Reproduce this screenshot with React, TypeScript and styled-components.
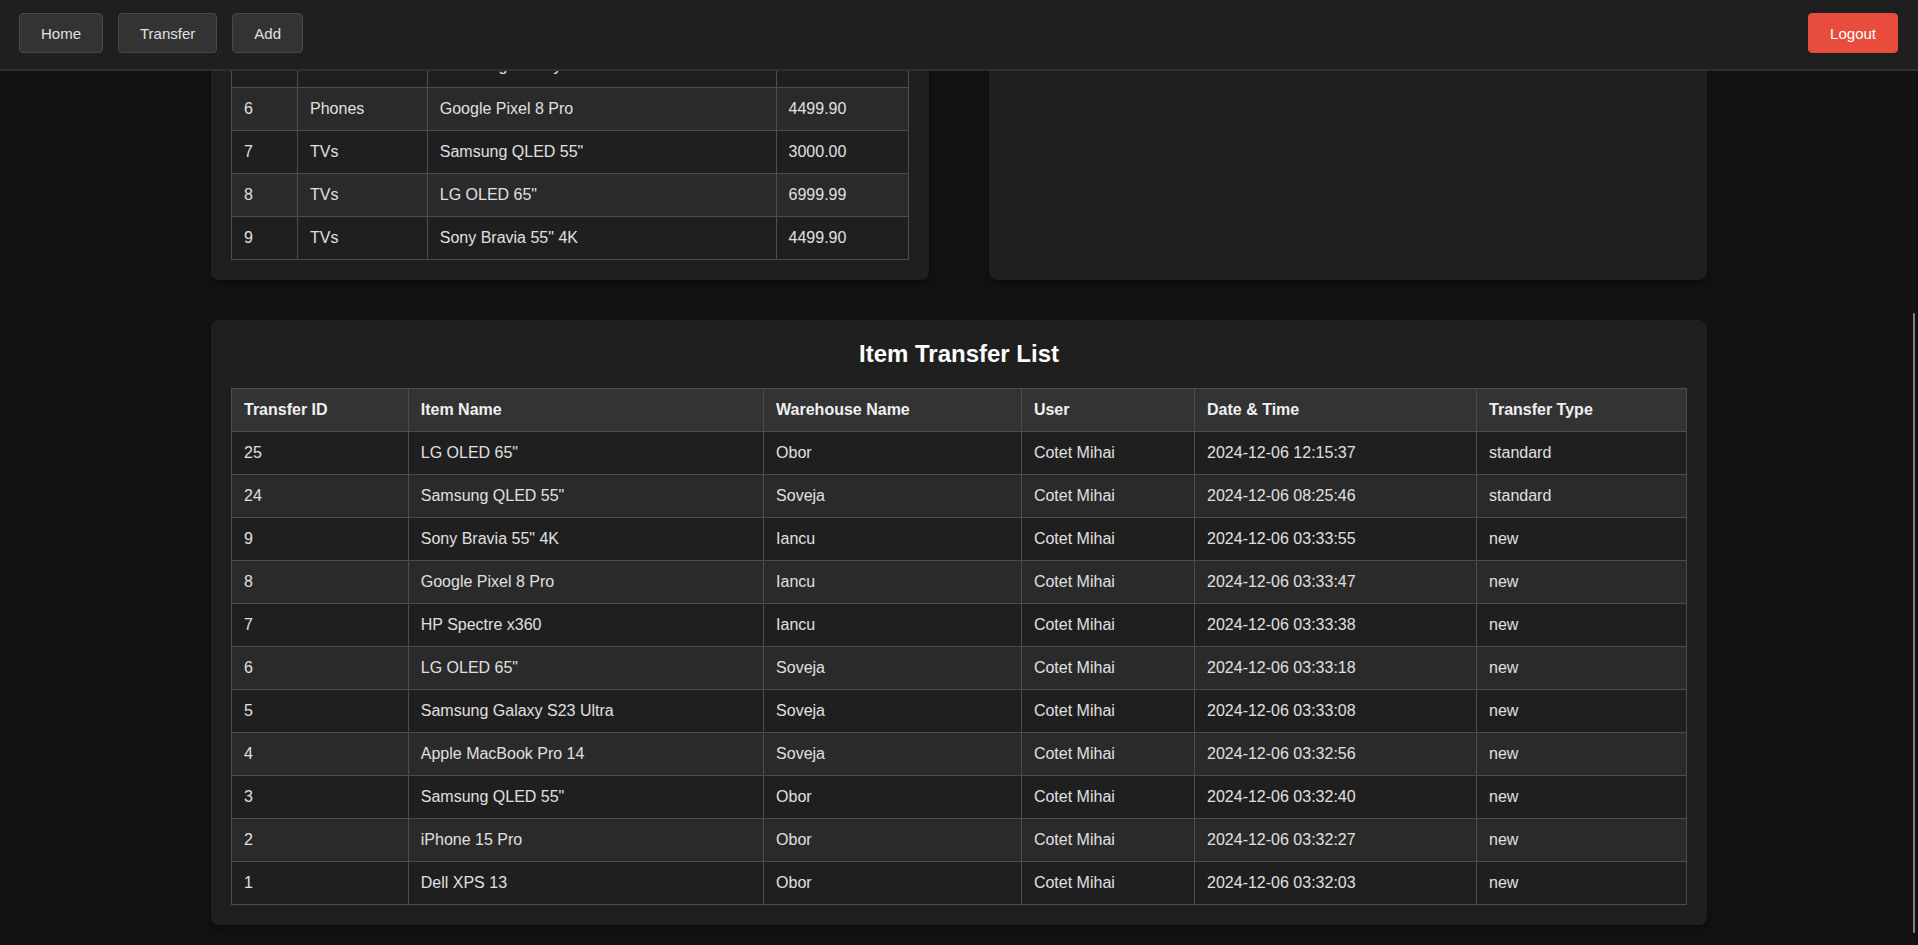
import styled, { createGlobalStyle } from "styled-components";

const GlobalStyle = createGlobalStyle`
  html, body {
    margin: 0;
    padding: 0;
    background: #121212;
    color: #e0e0e0;
    font-family: "Liberation Sans", Arial, sans-serif;
    overflow: hidden;
  }
  * { box-sizing: border-box; }
`;

const NavBar = styled.nav`
  position: fixed;
  top: 0;
  left: 0;
  right: 0;
  z-index: 10;
  height: 71px;
  padding: 13px 20px 0 19px;
  display: flex;
  align-items: flex-start;
  justify-content: space-between;
  background: #1f1f1f;
  border-bottom: 2px solid #2f2f2f;
`;

const NavGroup = styled.div`
  display: flex;
  gap: 15px;
`;

const NavButton = styled.button<{ $danger?: boolean }>`
  height: 40px;
  padding: 0 21px;
  font-family: inherit;
  font-size: 15px;
  color: ${(p) => (p.$danger ? "#fff" : "#e0e0e0")};
  background: ${(p) => (p.$danger ? "#e74c3c" : "#333")};
  border: 1px solid ${(p) => (p.$danger ? "#e74c3c" : "#484848")};
  border-radius: 4px;
  cursor: pointer;
`;

// the page is shown scrolled to its end: content sits on the bottom edge
const Viewport = styled.main`
  height: 100vh;
  overflow: hidden;
  display: flex;
  flex-direction: column;
  justify-content: flex-end;
`;

const Container = styled.div`
  width: 78%;
  margin: 0 auto;
  padding-bottom: 20px;
  display: flex;
  flex-direction: column;
  gap: 40px;
  flex-shrink: 0;
`;

const TopRow = styled.div`
  display: grid;
  grid-template-columns: 1fr 1fr;
  gap: 60px;
`;

const Card = styled.section`
  background: #1f1f1f;
  border-radius: 8px;
  padding: 20px;
  box-shadow: 0 4px 10px rgba(0, 0, 0, 0.35);
`;

const CardTitle = styled.h2`
  margin: 0 0 20px;
  font-size: 24px;
  font-weight: bold;
  color: #fff;
  text-align: center;
`;

const Table = styled.table`
  width: 100%;
  border-collapse: collapse;
  table-layout: fixed;
  font-size: 16px;

  tbody tr:nth-child(odd) {
    background: #1f1f1f;
  }
  tbody tr:nth-child(even) {
    background: #2a2a2a;
  }
`;

const Th = styled.th<{ $w: string }>`
  width: ${(p) => p.$w};
  padding: 12px;
  text-align: left;
  font-weight: bold;
  color: #f0f0f0;
  background: #333;
  border: 1px solid #4d4d4d;
`;

const Td = styled.td`
  padding: 12px;
  color: #e0e0e0;
  border: 1px solid #4d4d4d;
  white-space: nowrap;
`;

const ScrollThumb = styled.div`
  position: fixed;
  right: 3px;
  top: 313px;
  bottom: 12px;
  width: 2px;
  border-radius: 1px;
  background: #857d80;
`;

const items = [
  { id: 1, category: "Laptops", name: "Apple MacBook Pro 14", price: "9999.00" },
  { id: 2, category: "Laptops", name: "Dell XPS 13", price: "6499.00" },
  { id: 3, category: "Laptops", name: "HP Spectre x360", price: "7299.99" },
  { id: 4, category: "Phones", name: "iPhone 15 Pro", price: "5999.00" },
  { id: 5, category: "Phones", name: "Samsung Galaxy S23 Ultra", price: "5499.90" },
  { id: 6, category: "Phones", name: "Google Pixel 8 Pro", price: "4499.90" },
  { id: 7, category: "TVs", name: 'Samsung QLED 55"', price: "3000.00" },
  { id: 8, category: "TVs", name: 'LG OLED 65"', price: "6999.99" },
  { id: 9, category: "TVs", name: 'Sony Bravia 55" 4K', price: "4499.90" },
];

const transfers = [
  { id: 25, item: 'LG OLED 65"', warehouse: "Obor", date: "2024-12-06 12:15:37", type: "standard" },
  { id: 24, item: 'Samsung QLED 55"', warehouse: "Soveja", date: "2024-12-06 08:25:46", type: "standard" },
  { id: 9, item: 'Sony Bravia 55" 4K', warehouse: "Iancu", date: "2024-12-06 03:33:55", type: "new" },
  { id: 8, item: "Google Pixel 8 Pro", warehouse: "Iancu", date: "2024-12-06 03:33:47", type: "new" },
  { id: 7, item: "HP Spectre x360", warehouse: "Iancu", date: "2024-12-06 03:33:38", type: "new" },
  { id: 6, item: 'LG OLED 65"', warehouse: "Soveja", date: "2024-12-06 03:33:18", type: "new" },
  { id: 5, item: "Samsung Galaxy S23 Ultra", warehouse: "Soveja", date: "2024-12-06 03:33:08", type: "new" },
  { id: 4, item: "Apple MacBook Pro 14", warehouse: "Soveja", date: "2024-12-06 03:32:56", type: "new" },
  { id: 3, item: 'Samsung QLED 55"', warehouse: "Obor", date: "2024-12-06 03:32:40", type: "new" },
  { id: 2, item: "iPhone 15 Pro", warehouse: "Obor", date: "2024-12-06 03:32:27", type: "new" },
  { id: 1, item: "Dell XPS 13", warehouse: "Obor", date: "2024-12-06 03:32:03", type: "new" },
];

function App() {
  return (
    <>
      <GlobalStyle />
      <NavBar>
        <NavGroup>
          <NavButton>Home</NavButton>
          <NavButton>Transfer</NavButton>
          <NavButton>Add</NavButton>
        </NavGroup>
        <NavButton $danger>Logout</NavButton>
      </NavBar>

      <Viewport>
        <Container>
          <TopRow>
            <Card>
              <CardTitle>Item List</CardTitle>
              <Table>
                <thead>
                  <tr>
                    <Th $w="9.76%">ID</Th>
                    <Th $w="19.16%">Category</Th>
                    <Th $w="51.52%">Name</Th>
                    <Th $w="19.56%">Price</Th>
                  </tr>
                </thead>
                <tbody>
                  {items.map((it) => (
                    <tr key={it.id}>
                      <Td>{it.id}</Td>
                      <Td>{it.category}</Td>
                      <Td>{it.name}</Td>
                      <Td>{it.price}</Td>
                    </tr>
                  ))}
                </tbody>
              </Table>
            </Card>
            <Card>
              <CardTitle>Warehouses</CardTitle>
            </Card>
          </TopRow>

          <Card>
            <CardTitle>Item Transfer List</CardTitle>
            <Table>
              <thead>
                <tr>
                  <Th $w="12.15%">Transfer ID</Th>
                  <Th $w="24.42%">Item Name</Th>
                  <Th $w="17.72%">Warehouse Name</Th>
                  <Th $w="11.9%">User</Th>
                  <Th $w="19.38%">Date &amp; Time</Th>
                  <Th $w="14.43%">Transfer Type</Th>
                </tr>
              </thead>
              <tbody>
                {transfers.map((t) => (
                  <tr key={t.id}>
                    <Td>{t.id}</Td>
                    <Td>{t.item}</Td>
                    <Td>{t.warehouse}</Td>
                    <Td>Cotet Mihai</Td>
                    <Td>{t.date}</Td>
                    <Td>{t.type}</Td>
                  </tr>
                ))}
              </tbody>
            </Table>
          </Card>
        </Container>
      </Viewport>
      <ScrollThumb />
    </>
  );
}

export default App;
